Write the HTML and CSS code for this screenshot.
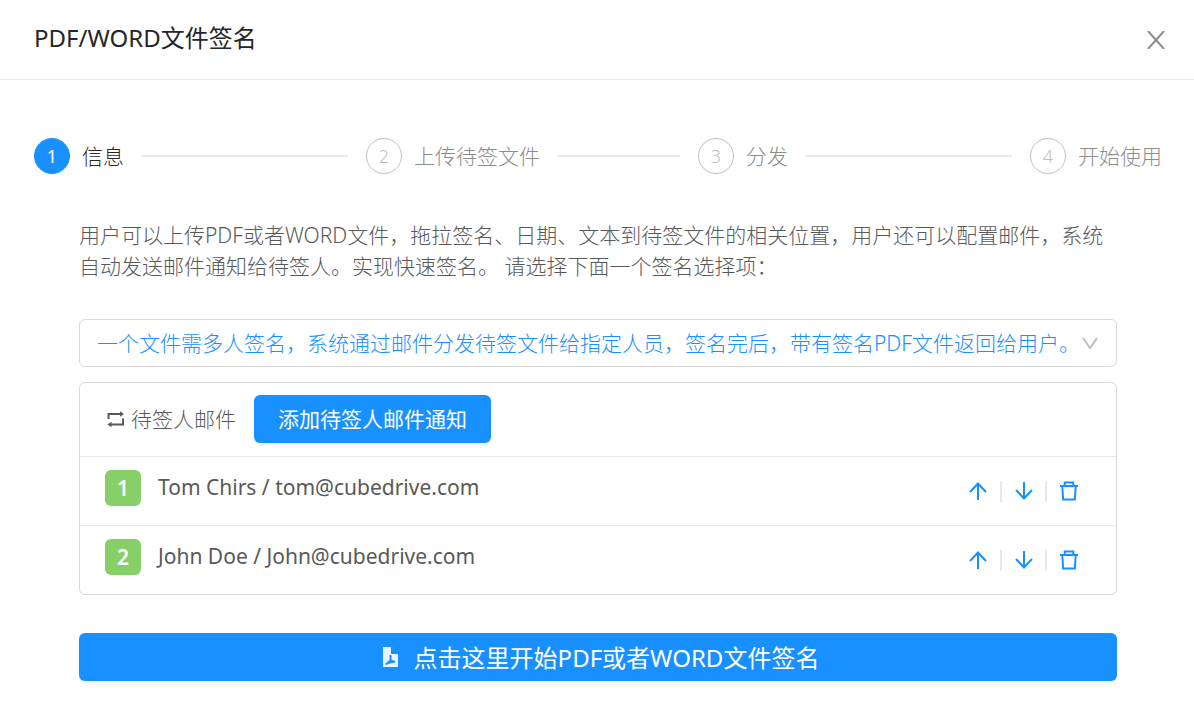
FILE: index.html
```html
<!DOCTYPE html>
<html lang="zh-CN">
<head>
<meta charset="utf-8">
<meta name="viewport" content="width=device-width, initial-scale=1">
<title>PDF/WORD文件签名</title>
<link rel="stylesheet" href="styles.css">
</head>
<body>
<svg class="sprite" aria-hidden="true">
  <symbol id="up" viewBox="0 0 18 18"><path d="M9 18V1.500M1 10 9 1.500l8 8.500" /></symbol>
  <symbol id="down" viewBox="0 0 18 18"><path d="M9 0v16.500M1 8l8 8.500L17 8" /></symbol>
  <symbol id="trash" viewBox="0 0 18 20"><path d="M0 5h18M4.700 5V1.500h8.600V5M2.300 5l.8 13.500h11.800L15.700 5" /></symbol>
</svg>
<header class="header">
  <h1 class="title">PDF/WORD文件签名</h1>
  <button class="close" type="button" aria-label="关闭">
    <svg class="close-icon" viewBox="0 0 18 18"><path d="M1 0 17 18M17 0 1 18"/></svg>
  </button>
</header>
<main>
  <ol class="steps">
    <li class="step active"><span class="step-number">1</span><span class="step-title">信息</span></li>
    <li class="step"><span class="step-number">2</span><span class="step-title">上传待签文件</span></li>
    <li class="step"><span class="step-number">3</span><span class="step-title">分发</span></li>
    <li class="step"><span class="step-number">4</span><span class="step-title">开始使用</span></li>
  </ol>
  <div class="content">
    <p class="intro">用户可以上传PDF或者WORD文件，拖拉签名、日期、文本到待签文件的相关位置，用户还可以配置邮件，系统自动发送邮件通知给待签人。实现快速签名。 请选择下面一个签名选择项：</p>
    <div class="select-wrap">
      <select class="select" aria-label="签名选择项">
        <option>一个文件需多人签名，系统通过邮件分发待签文件给指定人员，签名完后，带有签名PDF文件返回给用户。</option>
      </select>
      <svg class="chevron" viewBox="0 0 16 12"><path d="m1 1 7 10 7-10"/></svg>
    </div>
    <section class="card">
      <div class="card-header">
        <svg class="loop" viewBox="0 0 18 16"><path d="M1.500 8V3H14M16 7.500v6H3.500"/><path class="solid" d="M13 .3v5.400L17 3zM4.500 10.800v5.400L.5 13.500z"/></svg>
        <h2 class="card-title">待签人邮件</h2>
        <button class="button add" type="button">添加待签人邮件通知</button>
      </div>
      <ul class="signers">
        <li class="signer">
          <span class="tag">1</span><span class="name">Tom Chirs / tom@cubedrive.com</span>
          <div class="actions">
            <button class="action" type="button" aria-label="上移"><svg class="arrow"><use href="#up"/></svg></button>
            <button class="action" type="button" aria-label="下移"><svg class="arrow"><use href="#down"/></svg></button>
            <button class="action" type="button" aria-label="删除"><svg class="trash"><use href="#trash"/></svg></button>
          </div>
        </li>
        <li class="signer">
          <span class="tag">2</span><span class="name">John Doe / John@cubedrive.com</span>
          <div class="actions">
            <button class="action" type="button" aria-label="上移"><svg class="arrow"><use href="#up"/></svg></button>
            <button class="action" type="button" aria-label="下移"><svg class="arrow"><use href="#down"/></svg></button>
            <button class="action" type="button" aria-label="删除"><svg class="trash"><use href="#trash"/></svg></button>
          </div>
        </li>
      </ul>
    </section>
    <button class="button start" type="button">
      <svg class="pdf" viewBox="0 0 15 20"><path class="sheet" d="M0 0h8v7h7v13H0z"/><path class="mark" d="M7.500 8v5.500M3 17.500l4.500-4 4.500 1.500M4.500 16l7-1.500"/></svg>
      <span>点击这里开始PDF或者WORD文件签名</span>
    </button>
  </div>
</main>
</body>
</html>
```
FILE: styles.css
```css
* { box-sizing: border-box; }

body {
  margin: 0;
  background: #fff;
  color: #595959;
  font-family: "Noto Sans", "Noto Sans CJK SC", sans-serif;
  font-size: 21px;
  font-weight: 300;
  line-height: 31px;
}

h1, h2, p, ol, ul { margin: 0; padding: 0; }
ol, ul { list-style: none; }
button, select { font: inherit; cursor: pointer; }
svg { display: block; fill: none; stroke: currentColor; flex: none; }
.sprite { position: absolute; width: 0; height: 0; }

.header {
  display: flex;
  align-items: flex-start;
  justify-content: space-between;
  padding: 21px 19px 20px 34px;
  border-bottom: 1px solid #e8e8e8;
}
.title {
  color: #262626;
  font-size: 24px;
  font-weight: 400;
  line-height: 34px;
}
.close {
  padding: 10px;
  border: 0;
  background: none;
  color: #8c8c8c;
}
.close-icon { width: 18px; height: 18px; stroke-width: 2; }

.steps {
  display: flex;
  gap: 18px;
  padding: 58px 32px 0 34px;
}
.step {
  display: flex;
  flex: 1;
  align-items: center;
  color: #8c8c8c;
}
.step:last-child { flex: none; }
.step:not(:last-child)::after {
  content: "";
  flex: 1;
  height: 2px;
  margin-left: 18px;
  background: #e8e8e8;
}
.step-number {
  width: 36px;
  height: 36px;
  margin-right: 12px;
  border: 1px solid #bfbfbf;
  border-radius: 50%;
  color: #bfbfbf;
  font-size: 18px;
  line-height: 34px;
  text-align: center;
}
.step-title { white-space: nowrap; }
.active { color: #262626; }
.active .step-number {
  border-color: #1890ff;
  background: #1890ff;
  color: #fff;
  font-weight: 400;
}

.content { padding: 46px 77px 47px 79px; }

.select-wrap {
  position: relative;
  margin-top: 37px;
}
.select {
  display: block;
  width: 100%;
  height: 48px;
  padding: 0 40px 0 17px;
  border: 1px solid #d9d9d9;
  border-radius: 6px;
  appearance: none;
  background: #fff;
  color: #1890ff;
}
.chevron {
  position: absolute;
  top: 18px;
  right: 19px;
  width: 16px;
  height: 12px;
  color: #bfbfbf;
  stroke-width: 2;
  pointer-events: none;
}

.card {
  margin-top: 15px;
  border: 1px solid #d9d9d9;
  border-radius: 6px;
}
.card-header {
  display: flex;
  align-items: center;
  padding: 12px 27px 13px;
}
.loop { width: 18px; height: 16px; stroke-width: 2; }
.loop .solid { fill: currentColor; stroke: none; }
.card-title {
  margin: 0 18px 0 6px;
  font-size: 21px;
  font-weight: 300;
}

.button {
  height: 48px;
  border: 0;
  border-radius: 6px;
  background: #1890ff;
  box-shadow: 0 3px 0 #f5f5f5;
  color: #fff;
}
.add { padding: 0 24px; font-weight: 400; }

.signer {
  display: flex;
  align-items: flex-start;
  padding: 13px 26px 13px 25px;
  border-top: 1px solid #e8e8e8;
}
.tag {
  width: 36px;
  height: 36px;
  margin-right: 17px;
  border-radius: 6px;
  background: #87d068;
  color: #fff;
  font-weight: 600;
  line-height: 36px;
  text-align: center;
}
.name { flex: 1; font-weight: 400; line-height: 34px; }
.actions { display: flex; align-items: center; height: 42px; }
.action {
  display: flex;
  align-items: center;
  justify-content: center;
  width: 45px;
  height: 21px;
  padding: 0;
  border: 0;
  background: none;
  color: #1890ff;
}
.action + .action { border-left: 2px solid #e8e8e8; }
.arrow { width: 18px; height: 18px; stroke-width: 2; }
.trash { width: 18px; height: 20px; stroke-width: 2; }

.start {
  display: flex;
  align-items: center;
  justify-content: center;
  gap: 16px;
  width: 100%;
  margin-top: 38px;
  padding: 0 0 0 6px;
  font-size: 24px;
  font-weight: 400;
}
.pdf { width: 15px; height: 20px; }
.sheet { fill: #e6f7ff; stroke: none; }
.mark { stroke: #1890ff; stroke-width: 2; }
```
